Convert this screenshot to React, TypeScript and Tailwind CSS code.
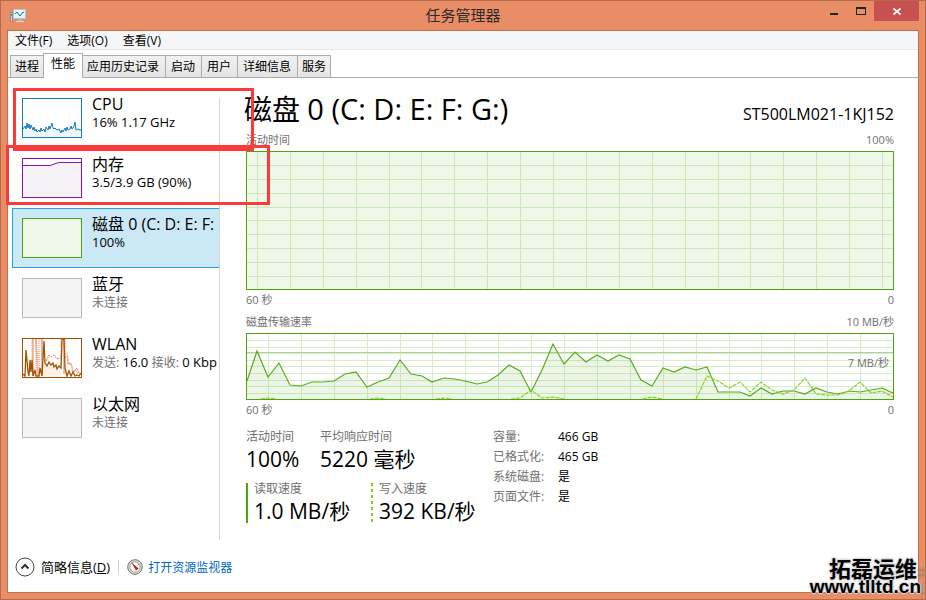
import React, { useState } from 'react';

interface Device {
  id: string;
  name: string;
  detail: React.ReactNode;
  muted?: boolean;
  chart: React.ReactNode;
}

const MENUS = ['文件(F)', '选项(O)', '查看(V)'];
const TABS = ['进程', '性能', '应用历史记录', '启动', '用户', '详细信息', '服务'];

const DETAILS = [
  { label: '容量:', value: '466 GB' },
  { label: '已格式化:', value: '465 GB' },
  { label: '系统磁盘:', value: '是' },
  { label: '页面文件:', value: '是' },
];

const ACTIVE_COLS = [11, 44, 77, 110, 143, 175, 208, 241, 274, 307, 340, 373, 406, 439, 472, 504, 537, 570, 603, 636];
const ACTIVE_ROWS = [14, 28, 42, 56, 69, 83, 97, 111, 125];
const RATE_COLS = [22, 55, 88, 121, 154, 186, 219, 252, 285, 318, 351, 384, 417, 450, 483, 515, 548, 581, 614];
const RATE_ROWS = [7, 14, 27, 33, 40, 47, 53, 60];

const READ_POINTS =
  '1,48 11,18 22,44 33,30 44,52 55,53 66,49 77,49 88,48 99,41 110,39 121,54 132,49 143,45 154,27 165,41 176,43 186,49 198,45 209,46 219,48 231,51 241,49 252,42 263,32 274,38 285,59 296,37 307,11 318,31 329,19 340,29 351,22 362,28 373,22 384,26 395,47 406,53 417,35 428,39 439,34 450,37 461,34 472,59 494,59 504,63 515,55 526,61 537,58 548,58 559,61 570,55 581,59 592,61 603,58 614,59 625,57 636,55 647,60';
const WRITE_POINTS =
  '450,66 461,43 472,48 483,55 494,49 504,59 515,49 526,57 537,61 548,57 559,45 570,61 581,62 592,62 603,58 614,49 625,60 636,58 647,64';

const Thumb: React.FC<{ stroke: string; fill: string; children?: React.ReactNode }> = ({ stroke, fill, children }) => (
  <svg viewBox="0 0 60 40" className="w-[60px] h-10 shrink-0" aria-hidden="true">
    <rect x="0.5" y="0.5" width="59" height="39" fill={fill} />
    {children}
    <rect x="0.5" y="0.5" width="59" height="39" fill="none" stroke={stroke} />
  </svg>
);

const CPU_POINTS =
  '1,31 3,28 4,31 5,25 6,30 7,26 8,31 9,27 11,32 12,29 13,33 14,31 15,34 17,32 18,34 19,30 20,33 22,31 23,34 24,29 26,32 27,28 28,31 30,25 31,30 32,31 33,30 35,32 37,31 38,33 39,35 40,32 41,34 43,30 44,33 45,29 46,32 48,31 49,28 50,31 52,28 53,24 54,32 56,31 58,32 59,32';

const DEVICES: Device[] = [
  {
    id: 'cpu',
    name: 'CPU',
    detail: '16% 1.17 GHz',
    chart: (
      <Thumb stroke="#117dbb" fill="#ffffff">
        <polygon points={`1,39 ${CPU_POINTS} 59,39`} fill="#f1f6fa" />
        <polyline points={CPU_POINTS} fill="none" stroke="#117dbb" />
      </Thumb>
    ),
  },
  {
    id: 'memory',
    name: '内存',
    detail: '3.5/3.9 GB (90%)',
    chart: (
      <Thumb stroke="#8b12ae" fill="#ffffff">
        <polygon points="1,39 1,7.5 28,7.5 32,6 37,4.5 59,4.5 59,39" fill="#f4f2f4" />
        <polyline points="1,7.5 28,7.5 32,6 37,4.5 59,4.5" fill="none" stroke="#8b12ae" />
      </Thumb>
    ),
  },
  {
    id: 'disk',
    name: '磁盘 0 (C: D: E: F:',
    detail: '100%',
    chart: <Thumb stroke="#4da60c" fill="#eff7e9" />,
  },
  { id: 'bluetooth', name: '蓝牙', detail: '未连接', muted: true, chart: <Thumb stroke="#bababa" fill="#f4f4f4" /> },
  {
    id: 'wlan',
    name: 'WLAN',
    detail: (
      <>
        <span className="text-xs text-[#707070]">发送:</span> 16.0 <span className="text-xs text-[#707070]">接收:</span> 0 Kbp
      </>
    ),
    chart: (
      <Thumb stroke="#a74f01" fill="#ffffff">
        <path d="M11 1V38M14 1L16 38M20 1V36M42 1V36" stroke="#f3bda1" strokeWidth="2" fill="none" />
        <path d="M10 1V30M14 1V36M17 1V36M20 1V30M39 1V20M43 1V20" stroke="#e8865f" strokeDasharray="1 1" fill="none" />
        <polygon points="22,39 22,24 26,27 29,25 33,28 38,27 39,39" fill="#fdf1e8" />
        <path d="M24 23L27 17L29 19L32 17L35 21L38 20M45 18L46 26L49 25L51 34L55 30L58 37" stroke="#dd6f44" strokeDasharray="2 1" fill="none" />
        <path d="M45 14L47 27L49 26L51 35L54 32L56 36" stroke="#f3bda1" fill="none" />
        <polyline
          points="1,36 3,38 4,12 6,34 7,38 8,22 9,34 10,22 11,38 13,32 14,38 17,38 18,30 20,38 22,3 23,25 25,28 27,24 29,27 31,25 32,29 34,27 35,31 37,28 39,30 40,1 42,1 43,30 45,38 47,33 49,38 51,34 53,38 55,37 57,38 59,35"
          fill="none"
          stroke="#a74f01"
          strokeWidth="1.3"
        />
      </Thumb>
    ),
  },
  { id: 'ethernet', name: '以太网', detail: '未连接', muted: true, chart: <Thumb stroke="#bababa" fill="#f4f4f4" /> },
];

const Grid: React.FC<{ cols: number[]; rows: number[]; height: number }> = ({ cols, rows, height }) => (
  <g fill="#c9e7b8">
    {cols.map(x => <rect key={`c${x}`} x={x} y="1" width="1" height={height - 2} />)}
    {rows.map(y => <rect key={`r${y}`} x="1" y={y} width="645" height="1" />)}
  </g>
);

const ActiveTimeChart = () => (
  <svg viewBox="0 0 648 139" preserveAspectRatio="none" className="block w-full h-[139px]" role="img" aria-label="活动时间">
    <rect width="648" height="139" fill="#eff7e9" />
    <Grid cols={ACTIVE_COLS} rows={ACTIVE_ROWS} height={139} />
    <rect x="0.5" y="0.5" width="647" height="138" fill="none" stroke="#4da60c" />
  </svg>
);

const TransferChart = () => (
  <svg viewBox="0 0 648 67" preserveAspectRatio="none" className="block w-full h-[67px]" role="img" aria-label="磁盘传输速率">
    <rect width="648" height="67" fill="#ffffff" />
    <g opacity="0.75">
      <Grid cols={RATE_COLS} rows={RATE_ROWS} height={67} />
    </g>
    <rect x="1" y="19" width="646" height="1" fill="#a5d98f" />
    <rect x="1" y="20" width="646" height="1" fill="#d8eccd" />
    <polygon points={`1,66 ${READ_POINTS} 647,66`} fill="#4da60c" fillOpacity="0.1" />
    <polyline points={READ_POINTS} fill="none" stroke="#58ab20" strokeWidth="1.2" />
    <g fill="none" stroke="#86d42a" strokeWidth="1.2" strokeDasharray="4 1">
      <polyline points={WRITE_POINTS} />
      <polyline points="265,66 274,65 285,57 296,65 307,64 318,66" />
      <polyline points="397,66 406,64 416,66" />
      <polyline points="15,66 22,65 30,66" />
      <polyline points="124,66 132,65 140,66" />
      <polyline points="190,66 198,65 206,66" />
    </g>
    <rect x="0.5" y="0.5" width="647" height="66" fill="none" stroke="#4da60c" />
  </svg>
);

const AppIcon = () => (
  <svg viewBox="0 0 16 16" className="size-4" aria-hidden="true">
    <rect x="0.5" y="4.5" width="2" height="9" fill="#c9c9c9" stroke="#8d9191" />
    <rect x="1" y="6" width="1" height="2" fill="#3fae49" />
    <rect x="3.5" y="1.5" width="12" height="9" fill="#e3f4fb" stroke="#b9c3c7" />
    <polyline points="5,6 7,4 9,7 10,8 12,5 14,4" fill="none" stroke="#1679ae" />
    <rect x="8" y="11" width="4" height="2" fill="#b2b5b5" />
    <rect x="6" y="13" width="8" height="1" fill="#d9dada" />
  </svg>
);

const ResourceIcon = () => (
  <svg viewBox="0 0 16 16" className="size-4" aria-hidden="true">
    <circle cx="8" cy="8" r="7.3" fill="#dcdcd8" stroke="#74746f" />
    <circle cx="8" cy="8" r="5.2" fill="#ffffff" stroke="#a5a5a0" />
    <path d="M4 3L9 11.5L11.6 9.4Z" fill="#cc1818" />
    <path d="M4 11.5L5 10.5M12 5L11 6" stroke="#999" />
  </svg>
);

const App: React.FC = () => {
  const [activeTab, setActiveTab] = useState('性能');
  const [selected, setSelected] = useState('disk');

  return (
    <div className="relative min-h-screen flex flex-col bg-[#e98d66] border border-[#b66a4c] px-[6px] pb-[6px] text-black text-xs font-['Open_Sans','Noto_Sans_CJK_SC',sans-serif]">
      {/* Title bar */}
      <header className="relative h-[29px] shrink-0 flex items-center justify-between">
        <div className="pl-[3px]"><AppIcon /></div>
        <h1 className="absolute inset-x-0 top-1 text-center text-[15px] leading-5 text-[#2b2b2b] pointer-events-none">任务管理器</h1>
        <div className="self-start flex h-5">
          <button aria-label="最小化" className="w-[26px] flex justify-center pt-3"><span className="w-2 h-[2px] bg-[#222]" /></button>
          <button aria-label="最大化" className="w-[27px] flex justify-center pt-[6px]"><span className="w-[10px] h-2 border border-t-2 border-[#222]" /></button>
          <button aria-label="关闭" className="w-[45px] bg-[#c75050] flex items-center justify-center">
            <svg viewBox="0 0 8 7" className="w-2 h-[7px]"><path d="M0.5 0.5L7.5 6.5M7.5 0.5L0.5 6.5" stroke="#fff" strokeWidth="1.7" /></svg>
          </button>
        </div>
      </header>

      <div className="flex-1 flex flex-col bg-white border border-[#c0724f]">
        <nav className="h-[19px] shrink-0 flex items-center gap-[15px] pl-[7px] pt-[2px] bg-[#f5f6f7] border-b border-[#e8e8e8]">
          {MENUS.map(m => <button key={m} className="leading-4">{m}</button>)}
        </nav>

        {/* Tabs */}
        <div role="tablist" className="h-7 shrink-0 flex items-end pl-[2px] border-b border-[#acacac]">
          {TABS.map(t => (
            <button
              key={t}
              role="tab"
              aria-selected={activeTab === t}
              onClick={() => setActiveTab(t)}
              className={activeTab === t
                ? 'relative z-10 -mb-px -mx-px h-[25px] px-[7px] pb-1 leading-5 bg-white border border-b-0 border-[#acacac]'
                : 'h-[22px] pl-[5px] pr-[6px] first:px-1 last:px-1 leading-5 border border-b-0 border-l-0 first:border-l border-[#acacac] bg-linear-to-b from-[#f1f1f1] to-[#e5e5e5]'}
            >
              {t}
            </button>
          ))}
        </div>

        <div className="flex-1 flex pt-[10px] pl-1 pr-6">
          {/* Device list */}
          <aside className="w-[207px] shrink-0 overflow-hidden">
            {DEVICES.map(d => (
              <button
                key={d.id}
                onClick={() => setSelected(d.id)}
                className={`w-full h-[60px] flex items-start text-left whitespace-nowrap overflow-hidden border border-r-0 pl-[9px] pt-[9px] ${selected === d.id ? 'bg-[#cbe8f6] border-[#26a0da]' : 'border-transparent'}`}
              >
                {d.chart}
                <span className="pl-[10px]">
                  <span className="block h-[15px] text-[16px] leading-3">{d.name}</span>
                  <span className={`block ${d.muted ? 'text-xs leading-5 text-[#707070]' : 'text-[13px] leading-[18px]'}`}>{d.detail}</span>
                </span>
              </button>
            ))}
          </aside>
          <div className="w-px mt-[10px] bg-[#d5d5d5] shrink-0" />

          <main className="flex-1 min-w-0 pl-[26px] pb-3">
            <div className="h-11 flex items-center justify-between">
              <h2 className="-ml-[2px] text-[28px] leading-[42px] pb-[2px]">磁盘 <span className="text-[29px]">0 (C: D: E: F: G:)</span></h2>
              <span className="text-[16px] pt-[10px]">ST500LM021-1KJ152</span>
            </div>
            <div className="flex justify-between h-[19px] text-[11px] leading-4 text-[#707070]">
              <span>活动时间</span>
              <span>100%</span>
            </div>
            <ActiveTimeChart />
            <div className="flex justify-between pt-[2px] text-[11px] leading-4 text-[#707070]">
              <span>60 秒</span>
              <span>0</span>
            </div>
            <div className="flex justify-between h-[25px] pt-[6px] text-[11px] leading-4 text-[#707070]">
              <span>磁盘传输速率</span>
              <span>10 MB/秒</span>
            </div>
            <div className="relative">
              <TransferChart />
              <span className="absolute right-[5px] top-[22px] text-[11px] leading-4 text-[#707070]">7 MB/秒</span>
            </div>
            <div className="flex justify-between pt-[2px] text-[11px] leading-4 text-[#707070]">
              <span>60 秒</span>
              <span>0</span>
            </div>

            {/* Statistics */}
            <div className="flex pt-[9px]">
              <div className="w-[247px] shrink-0 whitespace-nowrap">
                <div className="flex pt-[2px]">
                  <div className="w-[74px]">
                    <div className="leading-4 text-[#707070]">活动时间</div>
                    <div className="text-[21px] leading-7">100%</div>
                  </div>
                  <div>
                    <div className="leading-4 text-[#707070]">平均响应时间</div>
                    <div className="text-[21px] leading-7">5220 毫秒</div>
                  </div>
                </div>
                <div className="flex pt-[10px]">
                  <div className="w-[125px] h-10 border-l-2 border-[#4da60c] pl-[6px]">
                    <div className="h-[14px] leading-3 text-[#707070]">读取速度</div>
                    <div className="text-[21px] leading-7">1.0 MB/秒</div>
                  </div>
                  <div className="flex">
                    <svg viewBox="0 0 2 40" className="w-[2px] h-10" aria-hidden="true">
                      <path d="M1 0V40" stroke="#7bd320" strokeWidth="2" strokeDasharray="3 3" />
                    </svg>
                    <div className="pl-[6px]">
                      <div className="h-[14px] leading-3 text-[#707070]">写入速度</div>
                      <div className="text-[21px] leading-7">392 KB/秒</div>
                    </div>
                  </div>
                </div>
              </div>
              <dl className="leading-5">
                {DETAILS.map(d => (
                  <div key={d.label} className="flex">
                    <dt className="w-[65px] text-[#707070]">{d.label}</dt>
                    <dd>{d.value}</dd>
                  </div>
                ))}
              </dl>
            </div>
          </main>
        </div>

        <footer className="h-[52px] shrink-0 flex items-center pl-[7px] pt-[2px]">
          <button className="flex items-center gap-[6px] text-[13px] leading-5">
            <svg viewBox="0 0 20 20" className="size-5" aria-hidden="true">
              <circle cx="10" cy="10" r="9" fill="#fff" stroke="#444" />
              <path d="M6.5 11.5L10 8L13.5 11.5" fill="none" stroke="#333" strokeWidth="2" />
            </svg>
            <span>简略信息(<u>D</u>)</span>
          </button>
          <span className="w-px h-[14px] mx-2 bg-[#d0d0d0]" />
          <a href="#resmon" className="flex items-center gap-[5px] leading-5 text-[#0066cc]">
            <ResourceIcon />
            <span className="pt-px">打开资源监视器</span>
          </a>
        </footer>
      </div>

      {/* Highlight frames */}
      <div className="absolute left-3 top-[87px] w-[241px] h-[63px] border-3 border-[#fd3a3a] pointer-events-none" />
      <div className="absolute left-[5px] top-[144px] w-[264px] h-[60px] border-3 border-[#fd3a3a] pointer-events-none" />

      {/* Watermark */}
      <svg viewBox="0 0 8 32" className="absolute right-0 bottom-0 w-2 h-8 pointer-events-none" aria-hidden="true">
        <path d="M0 3H8M0 8H8M3 0V12M6 0V12M1 15L7 21M7 15L1 24M2 26H8M5 20V32" stroke="#8a7770" strokeOpacity="0.6" fill="none" />
      </svg>
      <div className="absolute right-1 bottom-[2px] flex flex-col items-end font-bold whitespace-nowrap pointer-events-none [text-shadow:1px_0_1px_#ddd,-1px_0_1px_#ddd,0_1px_1px_#ddd,0_-1px_1px_#ddd,0_0_3px_#aaa]">
        <span className="pr-1 text-[22px] leading-5 font-['Noto_Sans_CJK_SC',sans-serif]">拓磊运维</span>
        <span className="text-[19px] leading-5 font-['Liberation_Sans',sans-serif]">www.tlltd.cn</span>
      </div>
    </div>
  );
};

export default App;
